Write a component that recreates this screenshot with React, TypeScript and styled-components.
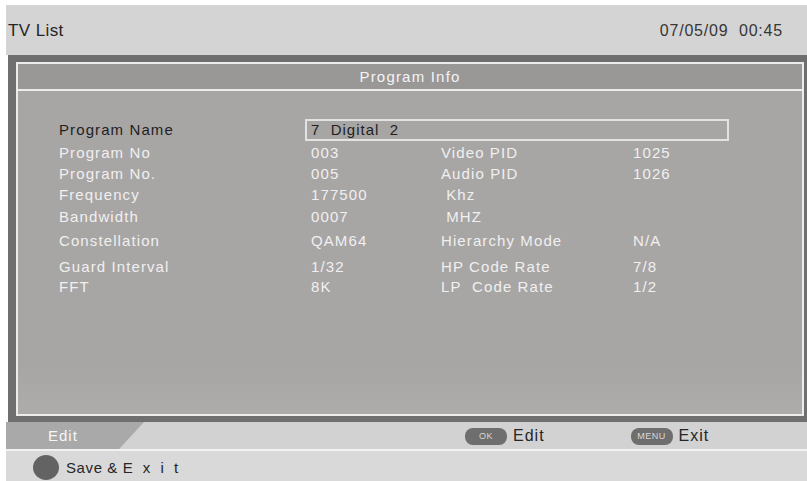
import styled, { createGlobalStyle } from "styled-components";

const GlobalStyle = createGlobalStyle`
  html, body {
    margin: 0;
    padding: 0;
    background: #ffffff;
  }
  * {
    box-sizing: border-box;
  }
`;

type InfoRow = {
  label: string;
  value: string;
  label2?: string;
  value2?: string;
  shift?: number;
};

const rows: InfoRow[] = [
  { label: "Program No", value: "003", label2: "Video PID", value2: "1025", shift: 1 },
  { label: "Program No.", value: "005", label2: "Audio PID", value2: "1026", shift: -1 },
  { label: "Frequency", value: "177500", label2: "\u00a0Khz", shift: -1 },
  { label: "Bandwidth", value: "0007", label2: "\u00a0MHZ" },
  { label: "Constellation", value: "QAM64", label2: "Hierarchy Mode", value2: "N/A", shift: 2 },
  { label: "Guard Interval", value: "1/32", label2: "HP Code Rate", value2: "7/8", shift: 4 },
  { label: "FFT", value: "8K", label2: "LP\u00a0 Code Rate", value2: "1/2", shift: -2 },
];

function App() {
  return (
    <>
      <GlobalStyle />
      <Screen>
        <Header>
          <HeaderTitle>TV List</HeaderTitle>
          <Clock>07/05/09&nbsp; 00:45</Clock>
        </Header>

        <Panel>
          <PanelInner>
            <PanelTitle>Program Info</PanelTitle>
            <PanelBody>
              <Row>
                <Label $dark>Program Name</Label>
                <NameBox>7&nbsp; Digital&nbsp; 2</NameBox>
              </Row>
              {rows.map((r) => (
                <Row key={r.label} $shift={r.shift}>
                  <Label>{r.label}</Label>
                  <Label>{r.value}</Label>
                  <Label>{r.label2 ?? ""}</Label>
                  <Label>{r.value2 ?? ""}</Label>
                </Row>
              ))}
            </PanelBody>
          </PanelInner>
        </Panel>

        <EditBar>
          <EditTab>Edit</EditTab>
          <Hints>
            <Hint>
              <KeyBadge>OK</KeyBadge>
              <HintText>Edit</HintText>
            </Hint>
            <Hint>
              <KeyBadge>MENU</KeyBadge>
              <HintText>Exit</HintText>
            </Hint>
          </Hints>
        </EditBar>

        <Footer>
          <Dot />
          <FooterText>Save &amp; E&nbsp; x&nbsp; i&nbsp; t</FooterText>
        </Footer>
      </Screen>
    </>
  );
}

export default App;

const Screen = styled.div`
  width: 807px;
  height: 481px;
  padding-top: 5px;
  padding-left: 6px;
  display: flex;
  flex-direction: column;
  background: #ffffff;
  font-family: "Liberation Sans", Arial, sans-serif;
  overflow: hidden;
`;

const Header = styled.div`
  height: 50px;
  background: #d4d4d4;
  display: flex;
  align-items: center;
  justify-content: space-between;
  padding: 2px 24px 0 2px;
`;

const HeaderTitle = styled.span`
  font-size: 17px;
  letter-spacing: 0.4px;
  color: #262626;
`;

const Clock = styled.span`
  font-size: 16px;
  letter-spacing: 0.8px;
  color: #363636;
`;

const Panel = styled.div`
  height: 367px;
  margin-left: 2px;
  border-style: solid;
  border-color: #6f6f6f;
  border-width: 7px 3px 6px 8px;
  display: flex;
`;

const PanelInner = styled.div`
  flex: 1;
  border: 2px solid #ececec;
  display: flex;
  flex-direction: column;
`;

const PanelTitle = styled.div`
  height: 27px;
  background: #9a9797;
  border-bottom: 2px solid #ececec;
  display: flex;
  align-items: center;
  justify-content: center;
  padding: 0 0 1px 0;
  font-size: 15px;
  letter-spacing: 1.2px;
  color: #f4f4f4;
`;

const PanelBody = styled.div`
  flex: 1;
  background: linear-gradient(to bottom, #a8a5a5 0%, #a8a5a5 85%, #aeabab 100%);
  padding: 28px 0 0 41px;
  display: flex;
  flex-direction: column;
`;

const Row = styled.div<{ $shift?: number }>`
  height: 22px;
  margin-top: ${(p) => p.$shift ?? 0}px;
  display: grid;
  grid-template-columns: 252px 130px 192px 1fr;
  align-items: center;
`;

const Label = styled.span<{ $dark?: boolean }>`
  font-size: 15px;
  letter-spacing: 1.1px;
  line-height: 22px;
  white-space: nowrap;
  color: ${(p) => (p.$dark ? "#1f1f1f" : "#f0f0f0")};
`;

const NameBox = styled.div`
  grid-column: 2 / -1;
  width: 424px;
  height: 22px;
  margin-left: -6px;
  padding-left: 4px;
  border: 2px solid #e2e2e2;
  font-size: 15px;
  letter-spacing: 1px;
  line-height: 18px;
  color: #1f1f1f;
  white-space: nowrap;
`;

const EditBar = styled.div`
  height: 29px;
  background: #d2d2d2;
  border-bottom: 2px solid #f2f2f2;
  display: flex;
  align-items: stretch;
`;

const EditTab = styled.div`
  width: 138px;
  background: #a9a9a9;
  clip-path: polygon(0 0, 100% 0, 82% 100%, 0 100%);
  padding: 5px 0 0 42px;
  font-size: 15px;
  letter-spacing: 1px;
  color: #f6f6f6;
`;

const Hints = styled.div`
  display: flex;
  align-items: center;
  gap: 86px;
  padding: 1px 0 0 321px;
`;

const Hint = styled.div`
  display: flex;
  align-items: center;
  gap: 6px;
`;

const KeyBadge = styled.span`
  width: 42px;
  height: 17px;
  border-radius: 8px;
  background: #6e6e6e;
  color: #d8d8d8;
  font-size: 9px;
  letter-spacing: 0.5px;
  display: flex;
  align-items: center;
  justify-content: center;
`;

const HintText = styled.span`
  font-size: 16px;
  letter-spacing: 1px;
  color: #262626;
`;

const Footer = styled.div`
  height: 30px;
  background: #d9d9d9;
  display: flex;
  align-items: center;
  gap: 7px;
  padding: 3px 0 0 27px;
`;

const Dot = styled.span`
  width: 26px;
  height: 25px;
  border-radius: 50%;
  background: #636363;
`;

const FooterText = styled.span`
  font-size: 15px;
  letter-spacing: 0.6px;
  color: #262626;
`;
